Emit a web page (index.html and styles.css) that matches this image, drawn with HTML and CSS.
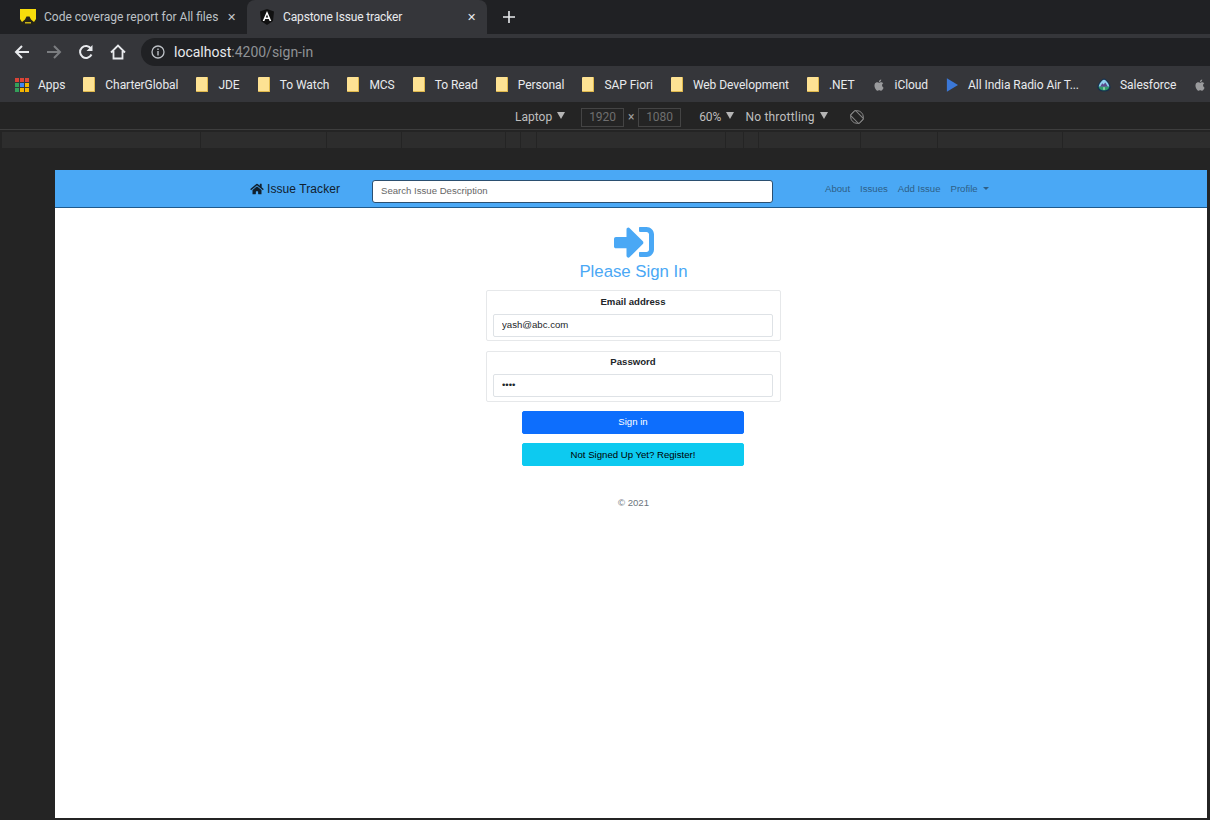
FILE: index.html
```html
<!DOCTYPE html>
<html>
<head>
  <meta charset="UTF-8">
  <title>Capstone Issue tracker</title>
  <link rel="stylesheet" href="styles.css">
</head>
<body>
  <!-- browser tabs -->
  <div class="tabstrip">
    <div class="tab">
      <svg class="favicon" viewBox="0 0 16 16"><rect width="16" height="16" fill="#f7dc0c"/><path d="M0 16V10L2 13 5 10.500 6.500 7.500H9.500L11 10.500 14 13 16 10V16Z" fill="#26241a"/><path d="M5 13H11V14.500H5Z" fill="#c9b215"/></svg>
      <span class="tab-title">Code coverage report for All files</span>
      <span class="tab-close">✕</span>
    </div>
    <div class="tab tab-active">
      <svg class="favicon" viewBox="0 0 16 16"><path d="M8 0L15 2.500 14 12 8 16 2 12 1 2.500Z" fill="#111"/><path d="M8 2L3.700 12H5.400L6.200 10H9.800L10.600 12H12.300ZM6.800 8.600L8 5.600 9.200 8.600Z" fill="#fff"/></svg>
      <span class="tab-title">Capstone Issue tracker</span>
      <span class="tab-close">✕</span>
    </div>
    <svg class="new-tab" viewBox="0 0 12 12"><path d="M6 0V12M0 6H12" stroke="#e8eaed" stroke-width="1.600"/></svg>
  </div>

  <!-- toolbar -->
  <div class="toolbar">
    <svg class="tool-icon" viewBox="0 0 16 16"><path d="M15 8H2M8 2L2 8l6 6" fill="none" stroke="#e8eaed" stroke-width="2"/></svg>
    <svg class="tool-icon" viewBox="0 0 16 16"><path d="M1 8H14M8 2l6 6-6 6" fill="none" stroke="#7b7d80" stroke-width="2"/></svg>
    <svg class="tool-icon" viewBox="0 0 16 16"><path d="M13.500 10.500A6 6 0 1 1 13 4.500" fill="none" stroke="#e8eaed" stroke-width="2"/><path d="M14.500 1V7H8.500Z" fill="#e8eaed"/></svg>
    <svg class="tool-icon" viewBox="0 0 16 16"><path d="M1 8.500L8 1.500 15 8.500M3.500 7V14.500H12.500V7" fill="none" stroke="#e8eaed" stroke-width="1.800"/></svg>
    <div class="omnibox">
      <svg class="info-icon" viewBox="0 0 14 14"><circle cx="7" cy="7" r="6" fill="none" stroke="#bdc1c6" stroke-width="1.300"/><path d="M7 6V10.500M7 3.500V5" stroke="#bdc1c6" stroke-width="1.400"/></svg>
      <span class="host">localhost</span><span class="url-rest">:4200/sign-in</span>
    </div>
  </div>

  <!-- bookmarks -->
  <div class="bookmarks">
    <div class="bookmark apps">
      <span class="apps-grid">
        <i class="c-r"></i><i class="c-r"></i><i class="c-r"></i>
        <i class="c-g"></i><i class="c-b"></i><i class="c-y"></i>
        <i class="c-g"></i><i class="c-y"></i><i class="c-y"></i>
      </span>
      <span>Apps</span>
    </div>
    <div class="bookmark"><span class="folder"></span><span>CharterGlobal</span></div>
    <div class="bookmark"><span class="folder"></span><span>JDE</span></div>
    <div class="bookmark"><span class="folder"></span><span>To Watch</span></div>
    <div class="bookmark"><span class="folder"></span><span>MCS</span></div>
    <div class="bookmark"><span class="folder"></span><span>To Read</span></div>
    <div class="bookmark"><span class="folder"></span><span>Personal</span></div>
    <div class="bookmark"><span class="folder"></span><span>SAP Fiori</span></div>
    <div class="bookmark"><span class="folder"></span><span>Web Development</span></div>
    <div class="bookmark"><span class="folder"></span><span>.NET</span></div>
    <div class="bookmark">
      <svg class="bm-icon" viewBox="1 0 13 14"><path d="M10.800 7.400c0-1.500 1.200-2.200 1.300-2.300-.7-1-1.800-1.200-2.200-1.200-.9-.1-1.800.6-2.300.6s-1.200-.6-2-.5c-1 0-2 .6-2.500 1.500-1.100 1.900-.3 4.600.8 6.100.5.700 1.100 1.600 1.900 1.500.8 0 1-.5 2-.5s1.200.5 2 .5 1.300-.7 1.800-1.500c.6-.8.800-1.600.8-1.700 0 0-1.600-.6-1.600-2.500zM9.300 2.900c.4-.5.700-1.200.6-1.900-.6 0-1.300.4-1.800.9-.4.500-.7 1.200-.6 1.800.7.100 1.400-.3 1.800-.8z" fill="#9a9b9d"/></svg>
      <span>iCloud</span>
    </div>
    <div class="bookmark">
      <svg class="bm-icon" viewBox="0 0 14 16"><path d="M1 0L14 8 1 16Z" fill="#3b78d8"/></svg>
      <span>All India Radio Air T...</span>
    </div>
    <div class="bookmark">
      <svg class="bm-icon bm-wide" viewBox="0 0 16 16"><path d="M8 .5C11 .5 15.500 7 15.500 10.500 15.500 13.500 12 15.500 8 15.500S.5 13.500 .5 10.500C.5 7 5 .5 8 .5Z" fill="#16324f"/><path d="M8 2C10.500 2 14 7.500 14 10H2C2 7.500 5.500 2 8 2Z" fill="#8fd0ee"/><path d="M3.500 10L6 6 7.500 7.500 9.500 5 12.500 10Z" fill="#5b4a8c"/><path d="M2 10H14C14 12.500 11 14.200 8 14.200S2 12.500 2 10Z" fill="#2f9e6a"/><path d="M8 10.500V13.500" stroke="#fff"/></svg>
      <span>Salesforce</span>
    </div>
    <div class="bookmark">
      <svg class="bm-icon" viewBox="1 0 13 14"><path d="M10.800 7.400c0-1.500 1.200-2.200 1.300-2.300-.7-1-1.800-1.200-2.200-1.200-.9-.1-1.800.6-2.300.6s-1.200-.6-2-.5c-1 0-2 .6-2.500 1.500-1.100 1.900-.3 4.600.8 6.100.5.700 1.100 1.600 1.900 1.500.8 0 1-.5 2-.5s1.200.5 2 .5 1.300-.7 1.800-1.500c.6-.8.800-1.600.8-1.700 0 0-1.600-.6-1.600-2.500zM9.300 2.900c.4-.5.700-1.200.6-1.900-.6 0-1.300.4-1.800.9-.4.500-.7 1.200-.6 1.800.7.100 1.400-.3 1.800-.8z" fill="#9a9b9d"/></svg>
    </div>
  </div>

  <!-- devtools device bar -->
  <div class="devicebar">
    <span class="dev-text dev-laptop">Laptop</span><span class="caret"></span>
    <span class="dim-box">1920</span><span class="times">×</span><span class="dim-box">1080</span>
    <span class="dev-text dev-zoom">60%</span><span class="caret caret-zoom"></span>
    <span class="dev-text dev-throttle">No throttling</span><span class="caret"></span>
    <svg class="rotate-icon" viewBox="0 0 14 14"><circle cx="7" cy="7" r="6.300" fill="none" stroke="#8a8a8a"/><rect x="3.500" y="1" width="7" height="12" rx="1" fill="#242424" stroke="#8a8a8a" transform="rotate(-45 7 7)"/></svg>
  </div>
  <div class="ruler">
    <i></i><i></i><i></i><i></i><i></i><i></i><i></i><i></i><i></i><i></i><i></i><i></i><i></i>
  </div>

  <!-- the emulated page -->
  <div class="viewport">
    <div class="page">
      <nav class="navbar">
        <a class="brand">
          <svg class="home-icon" viewBox="0 0 576 512"><path d="M280.370 148.260L96 300.110V464a16 16 0 0 0 16 16l112.060-.29a16 16 0 0 0 15.920-16V368a16 16 0 0 1 16-16h64a16 16 0 0 1 16 16v95.640a16 16 0 0 0 16 16.050L464 480a16 16 0 0 0 16-16V300L295.670 148.260a12.190 12.190 0 0 0-15.300 0zM571.600 251.470L488 182.560V44.050a12 12 0 0 0-12-12h-56a12 12 0 0 0-12 12v72.610L318.470 43a48 48 0 0 0-61 0L4.340 251.470a12 12 0 0 0-1.600 16.900l25.500 31A12 12 0 0 0 45.150 301l235.220-193.740a12.190 12.190 0 0 1 15.300 0L530.900 301a12 12 0 0 0 16.900-1.600l25.500-31a12 12 0 0 0-1.700-16.930z"/></svg>
          Issue Tracker
        </a>
        <input class="search" type="text" placeholder="Search Issue Description">
        <div class="nav-links">
          <a>About</a>
          <a>Issues</a>
          <a>Add Issue</a>
          <a class="dropdown">Profile</a>
        </div>
      </nav>

      <main class="signin">
        <svg class="signin-icon" viewBox="0 0 512 512"><path d="M416 448h-84c-6.600 0-12-5.400-12-12v-40c0-6.600 5.400-12 12-12h84c17.700 0 32-14.300 32-32V160c0-17.700-14.300-32-32-32h-84c-6.600 0-12-5.400-12-12V76c0-6.600 5.400-12 12-12h84c53 0 96 43 96 96v192c0 53-43 96-96 96zm-47-201L201 79c-15-15-41-4.500-41 17v96H24c-13.300 0-24 10.700-24 24v96c0 13.300 10.700 24 24 24h136v96c0 21.500 26 32 41 17l168-168c9.300-9.400 9.300-24.600 0-34z"/></svg>
        <h1 class="signin-title">Please Sign In</h1>
        <form class="signin-form">
          <div class="field">
            <label for="email">Email address</label>
            <input id="email" type="text" value="yash@abc.com">
          </div>
          <div class="field field-last">
            <label for="password">Password</label>
            <input id="password" type="password" value="1234">
          </div>
          <button class="btn btn-primary" type="button">Sign in</button>
          <button class="btn btn-info" type="button">Not Signed Up Yet? Register!</button>
        </form>
        <p class="copyright">© 2021</p>
      </main>
    </div>
  </div>
</body>
</html>
```

FILE: styles.css
```css
/* browser chrome */
html, body {
  margin: 0;
  height: 820px;
  overflow: hidden;
  background: #242424;
  font-family: Roboto, "Liberation Sans", sans-serif;
}
body {
  display: flex;
  flex-direction: column;
}
.tabstrip {
  height: 34px;
  flex: none;
  background: #202124;
  display: flex;
  align-items: center;
  padding-left: 8px;
  box-sizing: border-box;
}
.tab {
  width: 239px;
  height: 34px;
  box-sizing: border-box;
  padding: 0 11px 0 12px;
  display: flex;
  align-items: center;
  font-size: 12px;
  color: #bdc1c6;
}
.tab-active {
  width: 240px;
  background: #35363a;
  color: #e8eaed;
  border-radius: 8px 8px 0 0;
}
.tab-active .tab-title {
  letter-spacing: -0.15px;
}
.favicon {
  width: 16px;
  height: 16px;
  margin-right: 8px;
  flex: none;
}
.tab-title {
  flex: 1;
  white-space: nowrap;
}
.tab-close {
  font-size: 11px;
  color: #c6c8cb;
  margin-left: 4px;
}
.tab-active .tab-close {
  color: #e8eaed;
}
.new-tab {
  width: 12px;
  height: 12px;
  margin-left: 16px;
}
.toolbar {
  height: 33px;
  flex: none;
  background: #35363a;
  display: flex;
  align-items: center;
  padding: 3px 0 0 14px;
  box-sizing: border-box;
}
.tool-icon {
  width: 16px;
  height: 16px;
  margin-right: 16px;
  flex: none;
}
.omnibox {
  flex: 1;
  height: 28px;
  margin-left: -1px;
  background: #202124;
  border-radius: 14px 0 0 14px;
  display: flex;
  align-items: center;
  padding-left: 10px;
  font-size: 14px;
}
.info-icon {
  width: 14px;
  height: 14px;
  margin-right: 9px;
}
.host {
  color: #e8eaed;
}
.url-rest {
  color: #8f9296;
}
.bookmarks {
  height: 35px;
  flex: none;
  background: #35363a;
  display: flex;
  align-items: center;
  gap: 18px;
  padding-left: 15px;
  box-sizing: border-box;
  font-size: 12px;
  letter-spacing: -0.05px;
  color: #e8eaed;
  white-space: nowrap;
  overflow: hidden;
}
.bookmark {
  display: flex;
  align-items: center;
  gap: 10px;
  flex: none;
}
.apps {
  margin-right: 0;
  gap: 9px;
}
.apps-grid {
  width: 14px;
  height: 14px;
  display: grid;
  grid-template-columns: repeat(3, 4px);
  grid-auto-rows: 4px;
  gap: 1px;
}
.c-r { background: #db4437; }
.c-b { background: #4285f4; }
.c-g { background: #34a05a; }
.c-y { background: #f4b400; }
.folder {
  width: 12px;
  height: 15px;
  background: #fde293;
  border-right: 1px solid #e0b94c;
  border-bottom: 1px solid #e0b94c;
  box-sizing: border-box;
  border-radius: 1px;
}
.bm-icon {
  width: 12px;
  height: 16px;
  flex: none;
}
.bm-wide {
  width: 14px;
  margin-right: -1px;
}

/* devtools */
.devicebar {
  height: 28px;
  flex: none;
  background: #242424;
  border-bottom: 1px solid #3d3d3d;
  display: flex;
  align-items: center;
  padding-left: 515px;
  padding-top: 3px;
  box-sizing: border-box;
  font-size: 12px;
  color: #bfbfbf;
}
.dev-text {
  white-space: nowrap;
}
.caret {
  width: 0;
  height: 0;
  margin: 0 16px 3px 5px;
  border-left: 4px solid transparent;
  border-right: 4px solid transparent;
  border-top: 7px solid #b5b5b5;
}
.caret-zoom {
  margin-right: 11px;
}
.dim-box {
  width: 43px;
  height: 19px;
  box-sizing: border-box;
  border: 1px solid #444;
  color: #6f6f6f;
  text-align: center;
  line-height: 17px;
}
.times {
  width: 14px;
  text-align: center;
  color: #a0a0a0;
}
.dev-zoom {
  margin-left: 18px;
}
.dev-throttle {
  letter-spacing: 0.2px;
}
.rotate-icon {
  width: 14px;
  height: 14px;
  margin-left: 6px;
}
.ruler {
  margin-top: 2px;
  height: 16px;
  flex: none;
  padding-left: 2px;
  display: grid;
  grid-template-columns: 198px 125px 74px 103px 14px 15px 188px 17px 14px 101px 76px 124px 1fr;
  gap: 1px;
}
.ruler i {
  background: #2d2d2d;
}
.viewport {
  flex: 1;
  padding: 22px 3px 2px 55px;
  min-height: 0;
  display: flex;
}

/* the emulated page */
.page {
  flex: 1;
  background: #fff;
  font-family: "Liberation Sans", Arial, sans-serif;
  display: flex;
  flex-direction: column;
}
.navbar {
  height: 38px;
  box-sizing: border-box;
  background: #4aa8f5;
  border-bottom: 1px solid #1f5a8c;
  display: flex;
  align-items: center;
  padding-left: 195px;
}
.brand {
  display: flex;
  align-items: center;
  gap: 3px;
  width: 122px;
  font-size: 12px;
  letter-spacing: 0.08px;
  color: #10202e;
}
.home-icon {
  width: 14px;
  height: 12px;
  fill: #10202e;
}
.search {
  width: 401px;
  height: 23px;
  margin-top: 6px;
  box-sizing: border-box;
  padding: 0 8px 2px;
  border: 1px solid #2b4f70;
  border-radius: 3px;
  font: 9.600px "Liberation Sans", Arial, sans-serif;
  outline: none;
}
.search::placeholder {
  color: #666;
}
.nav-links {
  display: flex;
  gap: 10px;
  margin-left: 52px;
  font-size: 9.600px;
  color: #2e5f87;
}
.dropdown::after {
  content: "";
  display: inline-block;
  margin-left: 5px;
  vertical-align: 2px;
  border-left: 3px solid transparent;
  border-right: 3px solid transparent;
  border-top: 3px solid #2e5f87;
}
.signin {
  width: 295px;
  margin-left: 431px;
  display: flex;
  flex-direction: column;
  align-items: center;
  padding-top: 14px;
}
.signin-icon {
  width: 40px;
  height: 40px;
  fill: #4aa8f5;
}
.signin-title {
  margin: 0 0 8px;
  font-size: 16.800px;
  font-weight: 400;
  line-height: 20px;
  color: #4aa8f5;
}
.signin-form {
  width: 100%;
  display: flex;
  flex-direction: column;
  align-items: flex-start;
}
.field {
  width: 100%;
  height: 51px;
  box-sizing: border-box;
  margin-bottom: 10px;
  padding: 5px 7px 0 6px;
  border: 1px solid #e6e8ea;
  border-radius: 2px;
  text-align: center;
}
.field-last {
  margin-bottom: 9px;
  padding-top: 4px;
}
.field label {
  display: block;
  height: 12px;
  margin-bottom: 6px;
  font-size: 9.600px;
  line-height: 11px;
  font-weight: 700;
  color: #212529;
}
.field input {
  width: 100%;
  height: 23px;
  box-sizing: border-box;
  padding: 0 8px 2px;
  border: 1px solid #dee2e6;
  border-radius: 2px;
  font: 9.600px "Liberation Sans", Arial, sans-serif;
  color: #212529;
}
.btn {
  width: 222px;
  height: 23px;
  margin-left: 36px;
  padding: 0 0 2px;
  border-radius: 2px;
  font: 9.600px "Liberation Sans", Arial, sans-serif;
}
.btn-primary {
  border: 1px solid #0d6efd;
  background: #0d6efd;
  color: #fff;
  margin-bottom: 9px;
}
.btn-info {
  padding-bottom: 0;
  border: 1px solid #0dcaf0;
  background: #0dcaf0;
  color: #000;
}
.copyright {
  margin: 31px 0 0;
  font-size: 9.600px;
  color: #6c757d;
}
```
